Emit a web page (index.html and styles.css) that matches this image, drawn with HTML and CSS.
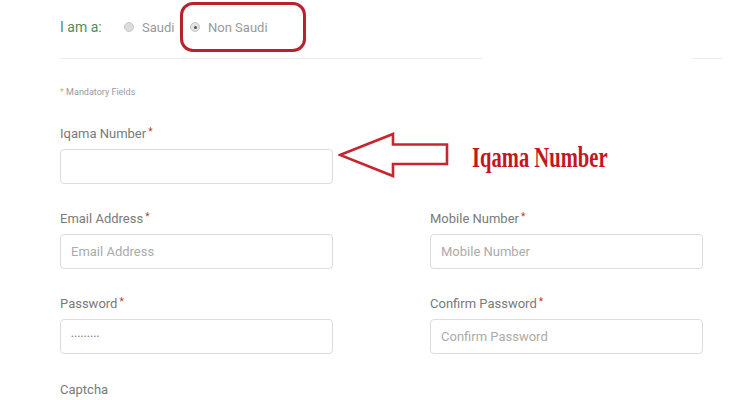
FILE: index.html
```html
<!DOCTYPE html>
<html lang="en">
<head>
<meta charset="utf-8">
<title>Register</title>
<link rel="stylesheet" href="styles.css">
</head>
<body>
<div class="page">
  <div class="iam">
    <span class="iam-label">I am a:</span>
    <label class="opt opt-saudi"><span class="radio"></span>Saudi</label>
    <label class="opt opt-non"><span class="radio checked"></span>Non Saudi</label>
  </div>
  <div class="divider"><span class="seg seg1"></span><span class="seg seg2"></span></div>
  <p class="mandatory"><span class="star-g">*</span> Mandatory Fields</p>

  <div class="iqama-row">
    <div class="field">
      <label class="lbl">Iqama Number<span class="star">*</span></label>
      <input class="inp" type="text">
    </div>
    <svg class="arrow" width="112" height="46" viewBox="0 0 112 46">
      <polygon points="2,23 55,2 55,12.5 109,12.5 109,32 55,32 55,44" fill="none" stroke="#c6262e" stroke-width="2.6" stroke-linejoin="miter"/>
    </svg>
    <span class="note">Iqama Number</span>
  </div>

  <div class="grid">
    <div class="field">
      <label class="lbl">Email Address<span class="star">*</span></label>
      <input class="inp" type="text" placeholder="Email Address">
    </div>
    <div class="field">
      <label class="lbl">Mobile Number<span class="star">*</span></label>
      <input class="inp" type="text" placeholder="Mobile Number">
    </div>
    <div class="field">
      <label class="lbl">Password<span class="star">*</span></label>
      <input class="inp pw" type="password" value="123456789">
    </div>
    <div class="field">
      <label class="lbl">Confirm Password<span class="star">*</span></label>
      <input class="inp" type="password" placeholder="Confirm Password">
    </div>
  </div>

  <div class="captcha">Captcha</div>
</div>
</body>
</html>
```
FILE: styles.css
```css
* { box-sizing: border-box; }
html, body { margin: 0; padding: 0; background: #fff; }
body { font-family: Roboto, "Liberation Sans", Arial, sans-serif; color: #888; overflow: hidden; }

.page { width: 750px; height: 400px; padding: 2px 0 0 60px; }

.iam { display: flex; align-items: center; height: 50px; }
.iam-label { font-size: 14px; color: #4f8d5f; width: 64px; }
.opt { display: flex; align-items: center; font-size: 13px; color: #9a9a9a; }
.opt-saudi { width: 56px; }
.radio { width: 10px; height: 10px; border-radius: 50%; background: #dcdcdc; border: 1px solid #c8c8c8; margin-right: 8px; position: relative; }
.radio.checked { background: #e2e2e2; }
.radio.checked::after { content: ""; position: absolute; left: 2.5px; top: 2.5px; width: 3px; height: 3px; border-radius: 50%; background: #555; }
.opt-non { width: 126px; height: 50px; border: 3px solid #b9222c; border-radius: 13px; padding-left: 7px; }

.divider { display: flex; margin-top: 6px; height: 1px; }
.seg { height: 1px; background: #ececec; }
.seg1 { width: 422px; }
.seg2 { width: 30px; margin-left: 210px; }

.mandatory { margin: 27px 0 0; font-size: 9px; line-height: 12px; color: #9a9a9a; }
.star-g { color: #b9c45a; }

.iqama-row { display: flex; align-items: flex-end; margin-top: 28px; }
.field { display: flex; flex-direction: column; width: 273px; }
.lbl { font-size: 13px; line-height: 16px; color: #7a7a7a; margin-bottom: 7px; }
.star { color: #c0392b; font-size: 10px; vertical-align: top; margin-left: 2px; position: relative; top: -2px; }
.inp { width: 273px; height: 35px; border: 1px solid #dcdcdc; border-radius: 4px; padding: 0 10px; font-family: inherit; font-size: 13px; color: #777; background: #fff; outline: none; }
.inp::placeholder { color: #ababab; }
.pw { font-size: 8px; letter-spacing: 0.5px; color: #888; }

.arrow { margin-left: 5px; margin-bottom: 6px; flex: none; }
.note { margin-left: 22px; margin-bottom: 11px; font-family: "Liberation Serif", "DejaVu Serif", serif; font-weight: bold; font-size: 29px; line-height: 32px; color: #c4161f; display: inline-block; white-space: nowrap; transform: scaleX(0.71); transform-origin: left center; }

.grid { display: grid; grid-template-columns: 273px 273px; column-gap: 97px; row-gap: 27px; margin-top: 27px; }

.captcha { margin-top: 28px; font-size: 13px; line-height: 16px; color: #7a7a7a; }
```
